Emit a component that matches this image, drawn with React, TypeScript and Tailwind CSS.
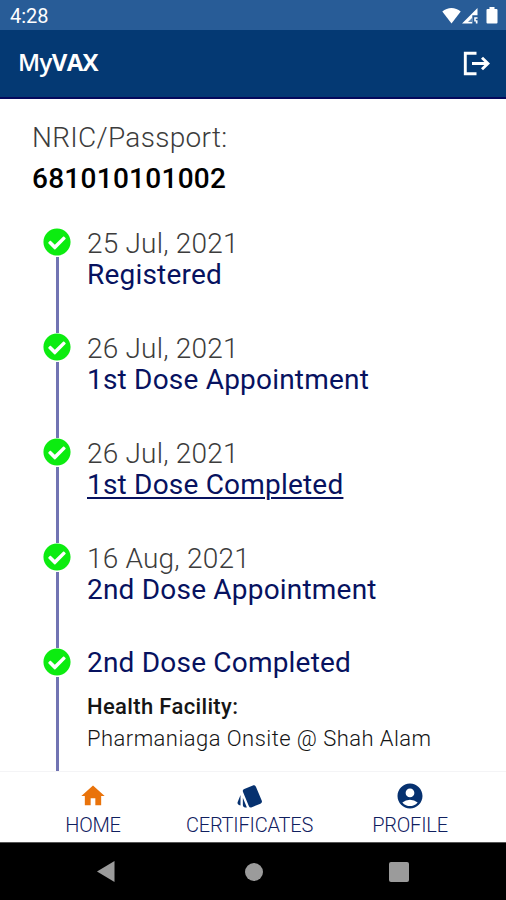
import type { ReactNode } from "react";
import { FaCheckCircle } from "react-icons/fa";
import { MdAccountCircle, MdHome } from "react-icons/md";

type Step = {
  date?: string;
  title: string;
  link?: boolean;
  details?: ReactNode;
};

const steps: Step[] = [
  { date: "25 Jul, 2021", title: "Registered" },
  { date: "26 Jul, 2021", title: "1st Dose Appointment" },
  { date: "26 Jul, 2021", title: "1st Dose Completed", link: true },
  { date: "16 Aug, 2021", title: "2nd Dose Appointment" },
  {
    title: "2nd Dose Completed",
    details: (
      <div className="mt-[14px] text-[22px] leading-8 text-[#151515]">
        <p className="font-medium tracking-[0.350px]">Health Facility:</p>
        <p className="font-light tracking-[0.450px]">Pharmaniaga Onsite @ Shah Alam</p>
      </div>
    ),
  },
];

function StatusBar() {
  return (
    <div className="flex h-[30px] shrink-0 items-center justify-between bg-[#285c97] pl-[10px] pr-[8px] text-white">
      <span className="text-[20px] leading-[30px] pt-[2px]">4:28</span>
      <div className="flex items-center">
        <svg width="19" height="17" viewBox="0 0 19 17" fill="currentColor">
          <path d="M9.500 16.500 0.300 4.600C5.500-0.200 13.500-0.200 18.700 4.600Z" />
        </svg>
        <svg className="ml-[1px]" width="16" height="17" viewBox="0 0 16 17" fill="currentColor">
          <path d="M0 16.500 15.500 1V8.300H10.300V16.500ZM12.200 10.200H15.500V11.800H13.800V13.300H15.500V16.500H13.800V14.500H12.200Z" />
          <path d="M6 15 10 11V15Z" fill="#5c86b4" />
        </svg>
        <svg className="ml-[8px]" width="12" height="17" viewBox="0 0 12 17" fill="currentColor">
          <path d="M3.500 0h5v2H10.500a1 1 0 0 1 1 1V15.500a1 1 0 0 1-1 1h-9a1 1 0 0 1-1-1V3a1 1 0 0 1 1-1h2Z" />
        </svg>
      </div>
    </div>
  );
}

function Header() {
  return (
    <header className="flex h-[69px] shrink-0 items-center justify-between border-b-2 border-[#05095c] bg-[#043973] pl-[18px] pr-[16px] text-white">
      <h1 className="pb-[4px] font-['Open_Sans','Liberation_Sans',sans-serif] text-[24px] leading-8 font-semibold tracking-[-0.600px]">
        My<span className="font-bold tracking-[-0.700px]">VAX</span>
      </h1>
      <svg width="27" height="25" viewBox="0 0 27 25" fill="none" stroke="currentColor" strokeWidth="2.900">
        <path d="M13.500 2.300H2.300V22.700H13.500M9 12.500H24M19 6.700 25 12.500 19 18.300" />
      </svg>
    </header>
  );
}

function CardsIcon() {
  return (
    <svg className="size-7" viewBox="0 0 24 24" fill="currentColor">
      <path d="M2.530 19.650l1.340.560v-9.030l-2.430 5.860c-.410 1.020.080 2.190 1.090 2.610zM22.030 15.950L17.070 3.980a2.013 2.013 0 0 0-1.810-1.230c-.260 0-.530.040-.790.150L7.100 5.950a1.999 1.999 0 0 0-1.080 2.600l4.960 11.970a1.998 1.998 0 0 0 2.600 1.080l7.360-3.050a1.994 1.994 0 0 0 1.090-2.600zM5.880 19.750c0 1.100.900 2 2 2h1.450l-3.450-8.340v6.340z" />
    </svg>
  );
}

function TimelineItem({ step }: { step: Step }) {
  return (
    <li className="flex h-[105px] shrink-0 gap-[16px] last:h-[125px]">
      <div className="flex w-[28px] flex-col items-center">
        <FaCheckCircle className="mb-[1px] size-[28px] shrink-0 text-[#0cec10]" />
        <span className="w-[3px] flex-1 bg-[#7174b3]" />
      </div>
      <div>
        {step.date && (
          <p className="text-[28px] leading-8 font-light tracking-[0.200px] text-[#3c3c3c]">{step.date}</p>
        )}
        <p
          className={`mb-[2px] text-[28px] leading-[29px] tracking-[0.200px] text-[#07125f] ${
            step.link ? "underline decoration-2 underline-offset-[3px]" : ""
          }`}
        >
          {step.title}
        </p>
        {step.details}
      </div>
    </li>
  );
}

function Tab({ icon, label, className }: { icon: ReactNode; label: string; className: string }) {
  return (
    <button className={`flex flex-col items-center pt-[10px] text-[#06316f] ${className}`}>
      {icon}
      <span className="text-[20px] leading-[31px] font-light tracking-[-0.200px] text-[#10205f]">{label}</span>
    </button>
  );
}

export default function App() {
  return (
    <div className="flex h-[900px] w-[506px] flex-col overflow-hidden bg-white font-['Roboto','Liberation_Sans',sans-serif]">
      <StatusBar />
      <Header />
      <main className="flex h-[672px] shrink-0 flex-col overflow-hidden pt-[19px]">
        <section className="h-[110px] shrink-0 pl-[32px]">
          <p className="text-[28px] leading-10 font-light tracking-[0.300px] text-[#3c3c3c]">NRIC/Passport:</p>
          <p className="text-[28px] leading-[42px] font-medium tracking-[0.270px] text-black">681010101002</p>
        </section>
        <ul className="flex flex-col pl-[43px]">
          {steps.map((step) => (
            <TimelineItem key={step.title} step={step} />
          ))}
        </ul>
      </main>
      <nav className="flex h-[71px] shrink-0 border-t border-[#f4f4f6] pl-[50px]">
        <Tab icon={<MdHome className="size-7" color="#e9730b" />} label="HOME" className="w-[86px]" />
        <Tab icon={<CardsIcon />} label="CERTIFICATES" className="ml-[41px] w-[145px]" />
        <Tab icon={<MdAccountCircle className="-my-px size-[30px]" />} label="PROFILE" className="ml-[38px] w-[100px]" />
      </nav>
      <footer className="flex h-[58px] shrink-0 items-center justify-between border-t border-[#555] bg-black pl-[97px] pr-[97px]">
        <svg width="18" height="21" viewBox="0 0 18 21" fill="#9b9b9b">
          <path d="M0 10.500 17.500 0V21Z" />
        </svg>
        <span className="ml-[3px] size-[18px] rounded-full bg-[#9b9b9b]" />
        <span className="size-[20px] rounded-[2px] bg-[#9b9b9b]" />
      </footer>
    </div>
  );
}
